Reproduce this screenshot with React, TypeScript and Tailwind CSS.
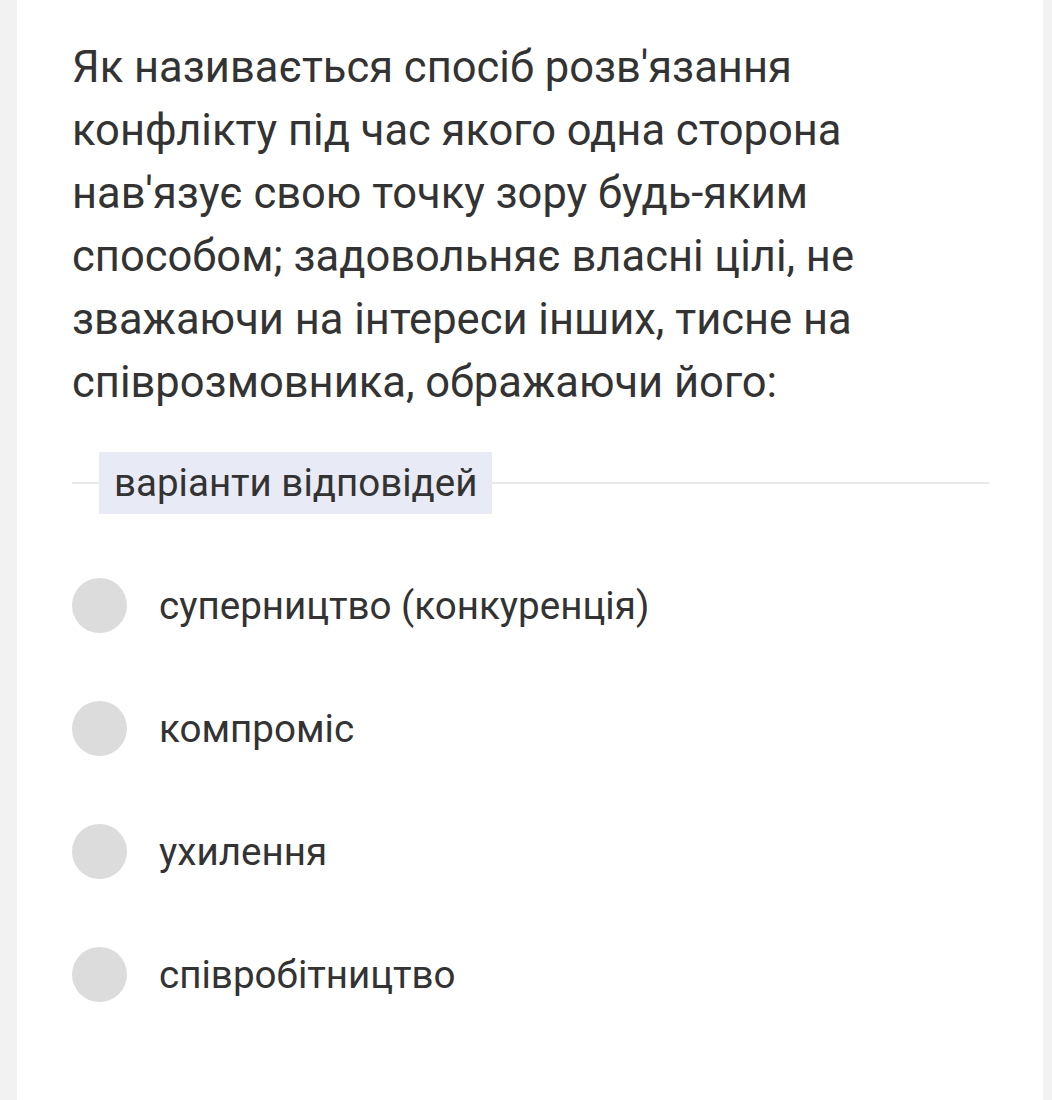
import React from "react";

const options = [
  "суперництво (конкуренція)",
  "компроміс",
  "ухилення",
  "співробітництво",
];

export default function App() {
  return (
    <div className="min-h-[1100px] bg-[#f2f2f2] pl-[17px] pr-[9px]" style={{ fontFamily: "Roboto, 'Noto Sans', sans-serif" }}>
      <div className="min-h-[1100px] bg-white pl-[55px] pr-[54px] pt-[36px] text-[#333333]">
        <p className="text-[43.5px] leading-[63px]">
          Як називається спосіб розв'язання конфлікту під час якого одна сторона нав'язує свою точку зору будь-яким способом; задовольняє власні цілі, не зважаючи на інтереси інших, тисне на співрозмовника, ображаючи його:
        </p>
        <div className="mt-[38px] flex items-center">
          <div className="h-[2px] w-[27px] bg-[#e9e9e9]" />
          <div className="bg-[#e8eaf5] px-[15px] h-[62px] flex items-center text-[38.5px]">варіанти відповідей</div>
          <div className="h-[2px] flex-1 bg-[#e9e9e9]" />
        </div>
        <div className="mt-[64px] flex flex-col gap-[68px]">
          {options.map((o) => (
            <div key={o} className="flex items-center h-[55px]">
              <div className="h-[55px] w-[55px] rounded-full bg-[#dcdcdc] shrink-0" />
              <span className="ml-[32px] text-[38.6px]">{o}</span>
            </div>
          ))}
        </div>
      </div>
    </div>
  );
}
